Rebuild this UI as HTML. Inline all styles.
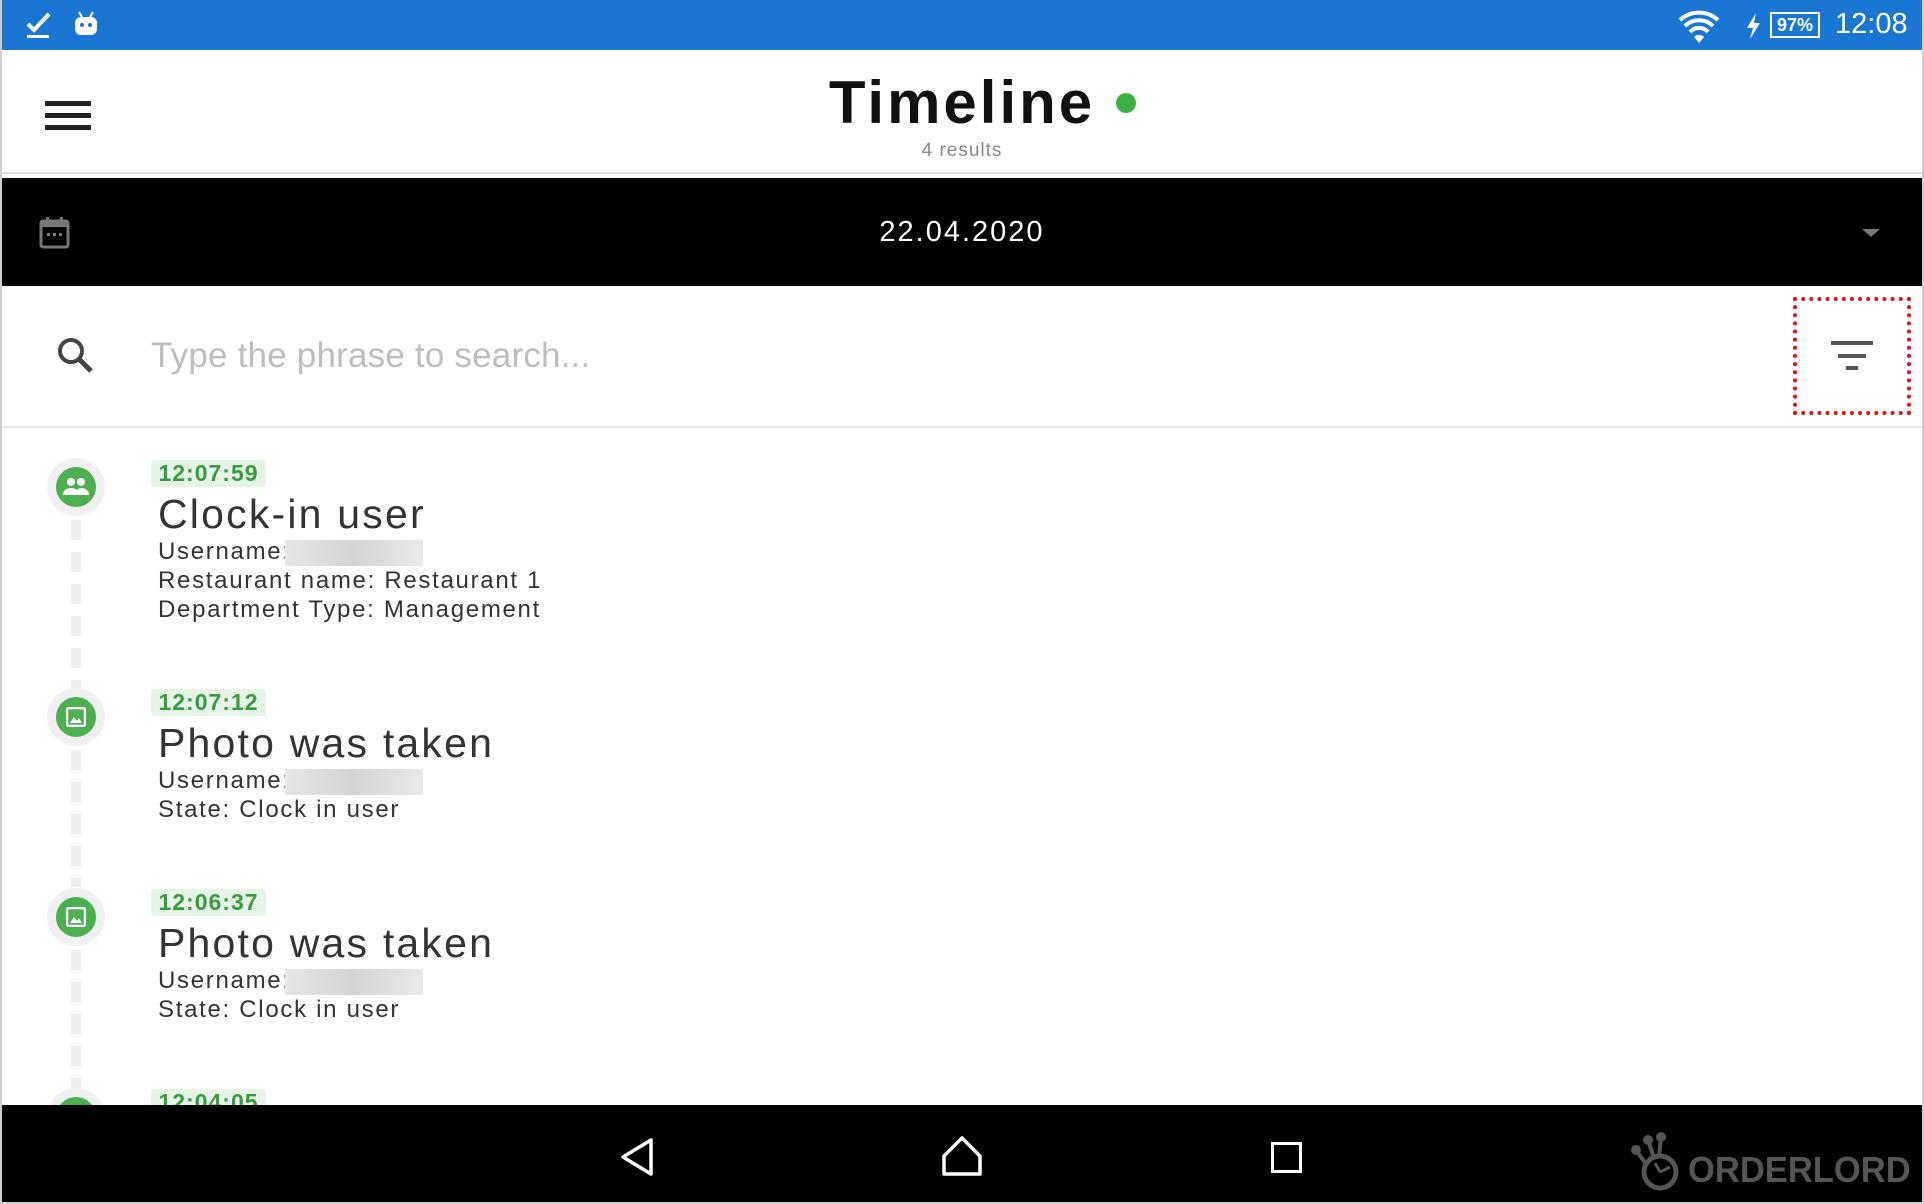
<!DOCTYPE html>
<html><head><meta charset="utf-8"><style>
*{margin:0;padding:0;box-sizing:border-box}
body{width:1924px;height:1204px;position:relative;overflow:hidden;background:#fff;font-family:"Liberation Sans",sans-serif;color:#333}
.a{position:absolute}
.frame{position:absolute;left:0;top:0;width:1924px;height:1204px;border:2px solid #cfcfcf;border-top:none;pointer-events:none}
.badge{position:absolute;left:151px;height:27px;width:115px;background:#e6f4e7;color:#3a9a40;font-size:23px;font-weight:bold;line-height:27px;text-align:center;border-radius:3px;letter-spacing:1px}
.title{position:absolute;left:158px;font-size:41px;color:#333;line-height:44px;letter-spacing:2.2px}
.line{position:absolute;left:158px;font-size:24px;color:#333;line-height:28px;letter-spacing:1.7px}
.blur{display:inline-block;width:138px;height:26px;margin-left:-14px;background:linear-gradient(90deg,#e6e6e6,#d4d4d4,#e9e9e9);vertical-align:middle}
.ic{position:absolute;left:47px;width:58px;height:58px;border-radius:50%;background:#f0f0f0}
.ic div{position:absolute;left:9px;top:9px;width:40px;height:40px;border-radius:50%;background:#4caf50}
.dash{position:absolute;left:71px;width:10px;background:repeating-linear-gradient(#eee 0 20px,transparent 20px 32px)}
</style></head><body>
<div class="a" style="left:0;top:0;width:1924px;height:50px;background:#1976d2"></div>
<svg class="a" style="left:24px;top:10px" width="30" height="30" viewBox="0 0 30 30"><path d="M4 14l6 6L25 4" stroke="#fff" stroke-width="4" fill="none"/><rect x="3" y="25" width="22" height="3" fill="#fff"/></svg>
<svg class="a" style="left:72px;top:10px" width="28" height="28" viewBox="0 0 28 28"><rect x="3" y="7" width="22" height="18" rx="6" fill="#fff"/><path d="M7 2l3 5M21 2l-3 5" stroke="#fff" stroke-width="2"/><circle cx="10" cy="15" r="2" fill="#1976d2"/><circle cx="18" cy="15" r="2" fill="#1976d2"/></svg>
<svg class="a" style="left:1678px;top:10px" width="42" height="34" viewBox="0 0 42 34"><path d="M2 10a28 28 0 0 1 38 0M7 16a20 20 0 0 1 28 0M12 22a12 12 0 0 1 18 0" stroke="#fff" stroke-width="4" fill="none"/><path d="M16 27l5 6 5-6a7 7 0 0 0-10 0z" fill="#fff"/></svg>
<svg class="a" style="left:1744px;top:12px" width="18" height="28" viewBox="0 0 18 28"><path d="M12 1L3 16h6l-3 11 10-16h-6z" fill="#fff"/></svg>
<div class="a" style="left:1770px;top:12px;width:50px;height:26px;border:2px solid #fff;color:#fff;font-size:18px;font-weight:bold;text-align:center;line-height:22px">97%</div>
<div class="a" style="left:1835px;top:8px;color:#fff;font-size:29px">12:08</div>

<div class="a" style="left:45px;top:101px;width:46px;height:5px;background:#222;box-shadow:0 12px 0 #222,0 24px 0 #222"></div>
<div class="a" style="left:0;top:70px;width:1924px;text-align:center;font-size:60px;font-weight:bold;color:#111;line-height:66px;letter-spacing:3px">Timeline</div>
<div class="a" style="left:1116px;top:93px;width:20px;height:20px;border-radius:50%;background:#3cb043"></div>
<div class="a" style="left:0;top:140px;width:1924px;text-align:center;font-size:19px;color:#888;letter-spacing:1px">4 results</div>
<div class="a" style="left:0;top:172px;width:1924px;height:2px;background:#ddd"></div>

<div class="a" style="left:0;top:178px;width:1924px;height:108px;background:#000"></div>
<svg class="a" style="left:39px;top:216px" width="31" height="33" viewBox="0 0 31 33"><rect x="2" y="5" width="27" height="26" rx="2" fill="none" stroke="#777" stroke-width="3"/><rect x="2" y="5" width="27" height="6" fill="#777"/><rect x="7" y="1" width="3" height="6" fill="#777"/><rect x="21" y="1" width="3" height="6" fill="#777"/><rect x="8" y="17" width="3" height="3" fill="#777"/><rect x="14" y="17" width="3" height="3" fill="#777"/><rect x="20" y="17" width="3" height="3" fill="#777"/></svg>
<div class="a" style="left:0;top:214px;width:1924px;text-align:center;color:#fff;font-size:29px;line-height:36px;letter-spacing:2px">22.04.2020</div>
<div class="a" style="left:1862px;top:229px;border-left:9px solid transparent;border-right:9px solid transparent;border-top:8px solid #777"></div>

<svg class="a" style="left:56px;top:336px" width="40" height="40" viewBox="0 0 40 40"><circle cx="15" cy="15" r="11" fill="none" stroke="#444" stroke-width="4"/><path d="M23 23l12 12" stroke="#444" stroke-width="5"/></svg>
<div class="a" style="left:151px;top:335px;font-size:35px;color:#bdbdbd;line-height:42px;letter-spacing:0.2px">Type the phrase to search...</div>
<div class="a" style="left:1793px;top:297px;width:118px;height:118px;border:4px dotted #e01010"></div>
<div class="a" style="left:1831px;top:341px;width:42px;height:4px;background:#555"></div>
<div class="a" style="left:1838px;top:354px;width:28px;height:4px;background:#555"></div>
<div class="a" style="left:1846px;top:366px;width:12px;height:4px;background:#555"></div>
<div class="a" style="left:0;top:426px;width:1924px;height:2px;background:#e6e6e6"></div>

<div class="dash" style="top:520px;height:168px"></div>
<div class="dash" style="top:750px;height:137px"></div>
<div class="dash" style="top:950px;height:140px"></div>

<div class="ic" style="top:458px"><div></div></div>
<svg class="a" style="left:62px;top:475px" width="28" height="24" viewBox="0 0 28 24"><circle cx="9" cy="7" r="4" fill="#fff"/><circle cx="19" cy="7" r="4" fill="#fff"/><path d="M1 20c0-5 4-7 8-7s8 2 8 7zM14 20c0-4 2-7 5-7 4 0 8 2 8 7z" fill="#fff"/></svg>
<div class="badge" style="top:460px">12:07:59</div>
<div class="title" style="top:492px">Clock-in user</div>
<div class="line" style="top:538px">Username: <span class="blur"></span></div>
<div class="line" style="top:567px">Restaurant name: Restaurant 1</div>
<div class="line" style="top:596px">Department Type: Management</div>

<div class="ic" style="top:688px"><div></div></div>
<svg class="a" style="left:66px;top:707px" width="20" height="20" viewBox="0 0 20 20"><rect x="1" y="1" width="18" height="18" rx="2" fill="none" stroke="#fff" stroke-width="2.5"/><path d="M4 16l4-6 3 4 2-3 3 5z" fill="#fff"/></svg>
<div class="badge" style="top:689px">12:07:12</div>
<div class="title" style="top:721px">Photo was taken</div>
<div class="line" style="top:767px">Username: <span class="blur"></span></div>
<div class="line" style="top:796px">State: Clock in user</div>

<div class="ic" style="top:888px"><div></div></div>
<svg class="a" style="left:66px;top:907px" width="20" height="20" viewBox="0 0 20 20"><rect x="1" y="1" width="18" height="18" rx="2" fill="none" stroke="#fff" stroke-width="2.5"/><path d="M4 16l4-6 3 4 2-3 3 5z" fill="#fff"/></svg>
<div class="badge" style="top:889px">12:06:37</div>
<div class="title" style="top:921px">Photo was taken</div>
<div class="line" style="top:967px">Username: <span class="blur"></span></div>
<div class="line" style="top:996px">State: Clock in user</div>

<div class="ic" style="top:1088px"><div></div></div>
<div class="badge" style="top:1089px">12:04:05</div>

<div class="a" style="left:0;top:1105px;width:1924px;height:99px;background:#000"></div>
<svg class="a" style="left:618px;top:1136px" width="40" height="42" viewBox="0 0 40 42"><path d="M33 4L5 21l28 17z" fill="none" stroke="#fff" stroke-width="3.5" stroke-linejoin="round"/></svg>
<svg class="a" style="left:940px;top:1134px" width="44" height="44" viewBox="0 0 44 44"><path d="M4 22L22 4l18 18v18H4z" fill="none" stroke="#fff" stroke-width="3.5" stroke-linejoin="round"/></svg>
<div class="a" style="left:1271px;top:1142px;width:31px;height:31px;border:3.5px solid #fff"></div>
<svg class="a" style="left:1630px;top:1132px" width="56" height="60" viewBox="0 0 56 60"><circle cx="6" cy="18" r="5" fill="#555"/><circle cx="18" cy="8" r="5" fill="#555"/><circle cx="31" cy="5" r="5" fill="#555"/><path d="M6 18l10 14M18 8l6 18M31 5l-2 20" stroke="#555" stroke-width="4"/><circle cx="30" cy="40" r="16" fill="none" stroke="#555" stroke-width="5"/><path d="M30 40l-5-9M30 40l10-5" stroke="#555" stroke-width="3"/></svg>
<div class="a" style="left:1688px;top:1150px;font-size:36px;font-weight:bold;color:#555;line-height:40px;transform:scaleX(0.96);transform-origin:0 0">ORDERLORD</div>
<div class="frame"></div>
</body></html>
